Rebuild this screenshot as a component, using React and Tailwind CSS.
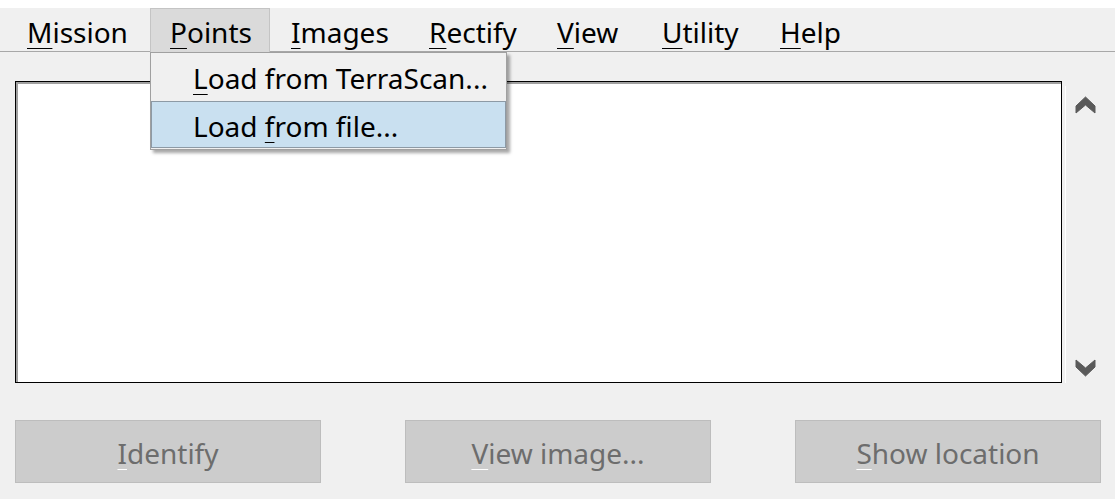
import React from "react";

const font = { fontFamily: '"Noto Sans", "Open Sans", sans-serif' };

function Mn({ children, light }) {
  return (
    <span
      className={`underline underline-offset-[5px] decoration-1 ${
        light ? "decoration-white" : "decoration-black"
      }`}
    >
      {children}
    </span>
  );
}

function MenuItem({ first, rest, active, w }) {
  return (
    <div
      className={`h-[44px] pt-[3px] flex items-center whitespace-nowrap ${w} ${
        active ? "bg-[#dadada] border border-b-0 border-[#c4c4c4] pl-[19px]" : "pl-[20px]"
      }`}
    >
      <span>
        <Mn>{first}</Mn>
        {rest}
      </span>
    </div>
  );
}

// scroll arrows, heavy chevron like the classic list scroller
function Chevron({ down }) {
  return (
    <svg
      width="21"
      height="18"
      viewBox="-1 -1 21 18"
      className="block shrink-0 w-[21px] h-[18px] max-w-none"
    >
      <polygon
        points={down ? "9.5,16 19,7 19,0 9.5,8 0,0 0,7" : "9.5,0 19,9 19,16 9.5,8 0,16 0,9"}
        fill="#5a5a5a"
        stroke="#5a5a5a"
        strokeWidth="1"
        strokeLinejoin="miter"
      />
    </svg>
  );
}

function Btn({ first, rest }) {
  return (
    <div className="w-[306px] h-[63px] pt-[2px] bg-[#cccccc] border border-[#bdbdbd] flex items-center justify-center text-[28px] text-[#6d6d6d]">
      <span>
        <Mn light>{first}</Mn>
        {rest}
      </span>
    </div>
  );
}

export default function App() {
  return (
    <div
      className="relative w-[1115px] h-[499px] bg-[#f0f0f0] overflow-hidden text-black leading-none"
      style={font}
    >
      <div className="h-[8px] bg-white" />
      <div className="h-[44px] border-b border-[#a8a8a8] flex pl-[7px] text-[28px]">
        <MenuItem first="M" rest="ission" w="w-[143px]" />
        <MenuItem first="P" rest="oints" active w="w-[120px]" />
        <MenuItem first="I" rest="mages" w="w-[139px] pl-[21px]" />
        <MenuItem first="R" rest="ectify" w="w-[128px]" />
        <MenuItem first="V" rest="iew" w="w-[105px]" />
        <MenuItem first="U" rest="tility" w="w-[118px]" />
        <MenuItem first="H" rest="elp" w="w-[110px]" />
      </div>

      <div className="flex pl-[15px] pt-[29px]">
        <div className="w-[1047px] h-[302px] bg-white border border-black">
          <div className="h-full border-t-2 border-l-2 border-[#a0a0a0]" />
        </div>
        <div className="relative w-[53px] flex flex-col items-center justify-between pt-[15px] pb-[6px] pr-[6px]">
          <div className="absolute left-[3px] top-[5px] bottom-0 w-px bg-white" />
          <Chevron />
          <Chevron down />
        </div>
      </div>

      <div className="flex gap-[84px] pl-[15px] pt-[37px]">
        <Btn first="I" rest="dentify" />
        <Btn first="V" rest="iew image..." />
        <Btn first="S" rest="how location" />
      </div>

      <div className="absolute left-[150px] top-[52px] w-[357px] h-[98px] bg-[#f0f0f0] border border-[#a0a0a0] shadow-[3px_3px_3px_rgba(0,0,0,0.35)] text-[28px] flex flex-col">
        <div className="h-[48px] pt-[2px] flex items-center pl-[42px]">
          <span>
            <Mn>L</Mn>oad from TerraScan...
          </span>
        </div>
        <div className="h-[47px] pt-[2px] flex items-center pl-[41px] bg-[#c9e0f0] border border-[#8d9aa5]">
          <span>
            Load <Mn>f</Mn>rom file...
          </span>
        </div>
      </div>
    </div>
  );
}
